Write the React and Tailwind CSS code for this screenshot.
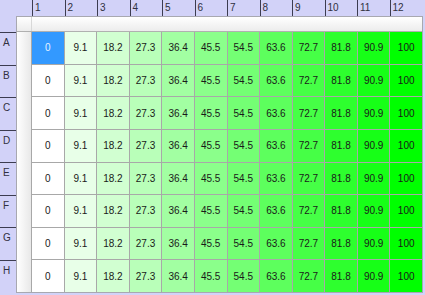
import React from "react";

const values = [0, 9.1, 18.2, 27.3, 36.4, 45.5, 54.5, 63.6, 72.7, 81.8, 90.9, 100];
const rows = ["A", "B", "C", "D", "E", "F", "G", "H"];

function color(v) {
  const c = Math.round(255 * (1 - v / 100));
  return `rgb(${c},255,${c})`;
}

export default function App() {
  return (
    <div
      className="w-[425px] h-[295px] bg-[#d2d2f8] flex flex-col overflow-hidden text-[#202020]"
      style={{ fontFamily: '"Liberation Sans", Arial, sans-serif' }}
    >
      {/* column header */}
      <div className="flex h-[16px] shrink-0">
        <div className="w-[32px] shrink-0" />
        {values.map((_, i) => (
          <div
            key={i}
            className="w-[32.5px] shrink-0 border-l border-[#3c3c50] text-[10px] leading-none pl-[2px] pt-[3px] text-[#303040]"
          >
            {i + 1}
          </div>
        ))}
      </div>
      <div className="flex">
        {/* row header */}
        <div className="w-[16px] shrink-0 flex flex-col">
          <div className="h-[16px] shrink-0" />
          {rows.map((r) => (
            <div
              key={r}
              className="h-[32.5px] shrink-0 border-t border-[#3c3c50] text-[10px] leading-none pl-[3px] pt-[5px] text-[#303040]"
            >
              {r}
            </div>
          ))}
        </div>
        {/* panel */}
        <div className="w-[407px] h-[277px] border border-[#a8a8b0] bg-white flex flex-col">
          <div className="h-[15px] shrink-0 flex border-b border-[#b0b0b0] bg-gradient-to-b from-white to-[#ececec]">
            <div className="w-[15px] border-r border-[#d8d8d8]" />
            <div className="flex-1" />
          </div>
          <div className="flex flex-1">
            <div className="w-[15px] shrink-0 border-r border-[#a8a8a8] bg-gradient-to-r from-white to-[#e8e8e8]" />
            <div className="flex-1 grid grid-cols-12 grid-rows-8 gap-px bg-[#a8a8a8]">
              {rows.map((r, ri) =>
                values.map((v, ci) => {
                  const sel = ri === 0 && ci === 0;
                  return (
                    <div
                      key={r + ci}
                      className={
                        "flex items-center justify-center text-[10px] " +
                        (sel ? "text-[#e6f2ff]" : "text-[#1a1a1a]")
                      }
                      style={{ backgroundColor: sel ? "#3399ff" : color(v) }}
                    >
                      {v}
                    </div>
                  );
                })
              )}
            </div>
          </div>
        </div>
      </div>
    </div>
  );
}
